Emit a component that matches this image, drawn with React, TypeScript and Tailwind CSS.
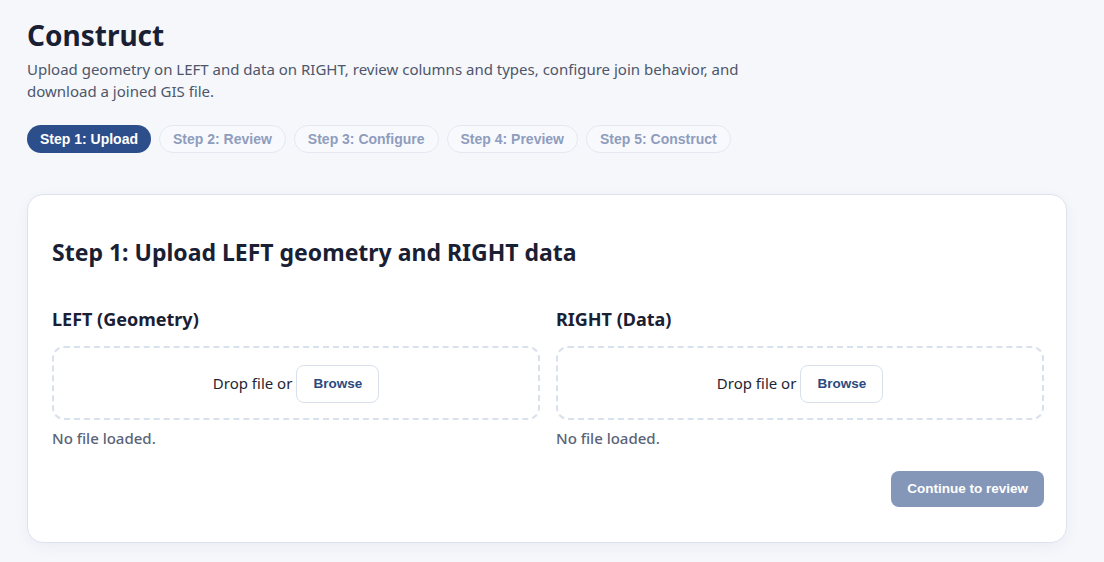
import { useState } from 'react'

const steps = ['Step 1: Upload', 'Step 2: Review', 'Step 3: Configure', 'Step 4: Preview', 'Step 5: Construct']

function DropZone({ label }: { label: string }) {
  return (
    <div className="flex flex-col">
      <h3 className="text-[18px] font-bold text-[#1a2033] leading-[24px] mb-[15px]">{label}</h3>
      <div className="h-[74px] rounded-xl border-2 border-dashed border-[#d9e1ec] flex items-center justify-center gap-1">
        <span className="text-[15px] text-[#1f2533]">Drop file or</span>
        <button className="h-[38px] mt-[2px] px-4 rounded-lg border border-[#d8e0ec] bg-white text-[13.5px] font-bold text-[#2c4a80] font-['Liberation_Sans',Arial,sans-serif]">
          Browse
        </button>
      </div>
      <p className="mt-[7px] text-[15px] font-medium text-[#5a6377] leading-[22px]">No file loaded.</p>
    </div>
  )
}

export default function App() {
  const [active] = useState(0)

  return (
    <div className="bg-[#f5f7fb] pl-[27px] pr-[37px] pt-[17px] font-['Noto_Sans','Open_Sans',sans-serif] w-[1104px] h-[562px] overflow-hidden">
      {/* Header */}
      <h1 className="text-[28px] font-bold text-[#1a2033] leading-[36px]">Construct</h1>
      <p className="mt-[6px] text-[15px] text-[#4d566a] leading-[21.5px] max-w-[740px]">
        Upload geometry on LEFT and data on RIGHT, review columns and types, configure join behavior, and download a joined GIS file.
      </p>

      {/* Step pills */}
      <div className="flex gap-2 mt-[23px]">
        {steps.map((s, i) => (
          <span
            key={s}
            className={`h-[28px] px-[13px] rounded-full flex items-center text-[14px] font-bold font-['Liberation_Sans',Arial,sans-serif] ${
              i === active
                ? 'bg-[#2c4f8b] text-white'
                : 'bg-[#f8f9fd] border border-[#e4e9f1] text-[#8f9dbd]'
            }`}
          >
            {s}
          </span>
        ))}
      </div>

      {/* Card */}
      <div className="mt-[41px] bg-white rounded-2xl border border-[#dde3ee] shadow-[0_4px_14px_rgba(30,50,90,0.05)] pl-6 pr-[22px] pt-[42px] pb-[35px]">
        <h2 className="text-[23px] font-bold text-[#1a2033] leading-[30px]">Step 1: Upload LEFT geometry and RIGHT data</h2>

        <div className="grid grid-cols-2 gap-4 mt-[40px]">
          <DropZone label="LEFT (Geometry)" />
          <DropZone label="RIGHT (Data)" />
        </div>

        <div className="flex justify-end mt-[22px]">
          <button className="h-9 px-4 rounded-lg bg-[#8497b8] text-white text-[13.5px] font-bold font-['Liberation_Sans',Arial,sans-serif]">
            Continue to review
          </button>
        </div>
      </div>
    </div>
  )
}
